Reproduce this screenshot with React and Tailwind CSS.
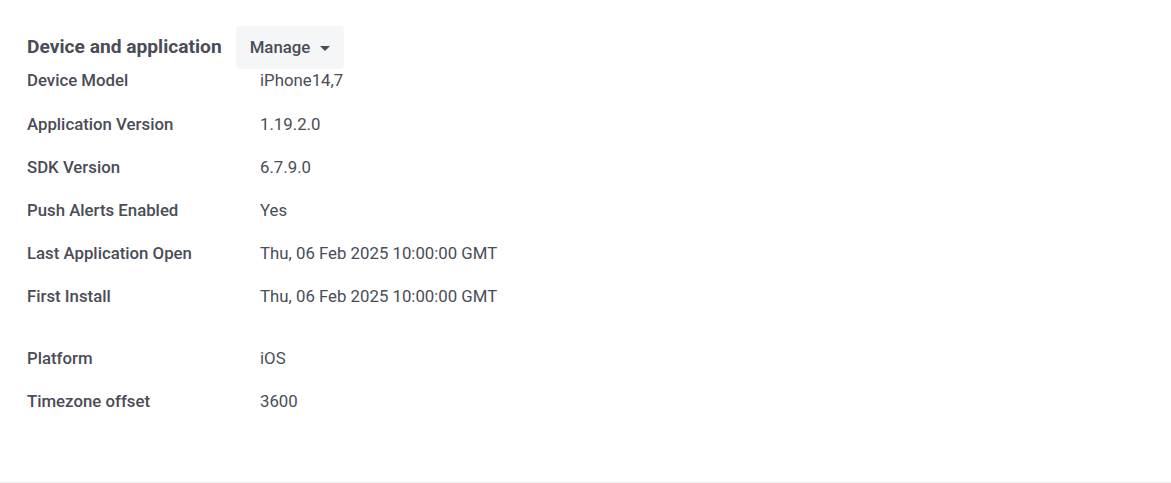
import React from 'react';

const deviceRows = [
  ['Device Model', 'iPhone14,7'],
  ['Application Version', '1.19.2.0'],
  ['SDK Version', '6.7.9.0'],
  ['Push Alerts Enabled', 'Yes'],
  ['Last Application Open', 'Thu, 06 Feb 2025 10:00:00 GMT'],
  ['First Install', 'Thu, 06 Feb 2025 10:00:00 GMT'],
];

const platformRows = [
  ['Platform', 'iOS'],
  ['Timezone offset', '3600'],
];

const InfoRow = ({ label, value }) => (
  <div className="flex h-6 items-center">
    <dt className="w-[233px] shrink-0 font-medium">{label}</dt>
    <dd>{value}</dd>
  </div>
);

const App = () => {
  return (
    <div
      className="h-[483px] border-b border-[#ececec] bg-white pl-[27px] pt-[26px] text-[16.8px] text-[#4a4c57]"
      style={{ fontFamily: 'Roboto, "Liberation Sans", sans-serif' }}
    >
      <div className="flex items-center">
        <h2 className="mb-[2px] mr-[14px] text-[19.2px] font-bold leading-none">Device and application</h2>
        <button
          type="button"
          className="flex h-[43px] items-center gap-[10px] rounded-[4px] bg-[#f5f6f8] pl-[14px] pr-[14px] font-medium"
        >
          Manage
          <svg width="10" height="5" viewBox="0 0 10 5" className="mt-[2px]">
            <path d="M0 0h10L5 5z" fill="#4a4c57" />
          </svg>
        </button>
      </div>

      <dl className="flex flex-col gap-[19.2px]">
        {deviceRows.map(([label, value]) => (
          <InfoRow key={label} label={label} value={value} />
        ))}
      </dl>

      <dl className="mt-[38px] flex flex-col gap-[19px]">
        {platformRows.map(([label, value]) => (
          <InfoRow key={label} label={label} value={value} />
        ))}
      </dl>
    </div>
  );
};

export default App;
